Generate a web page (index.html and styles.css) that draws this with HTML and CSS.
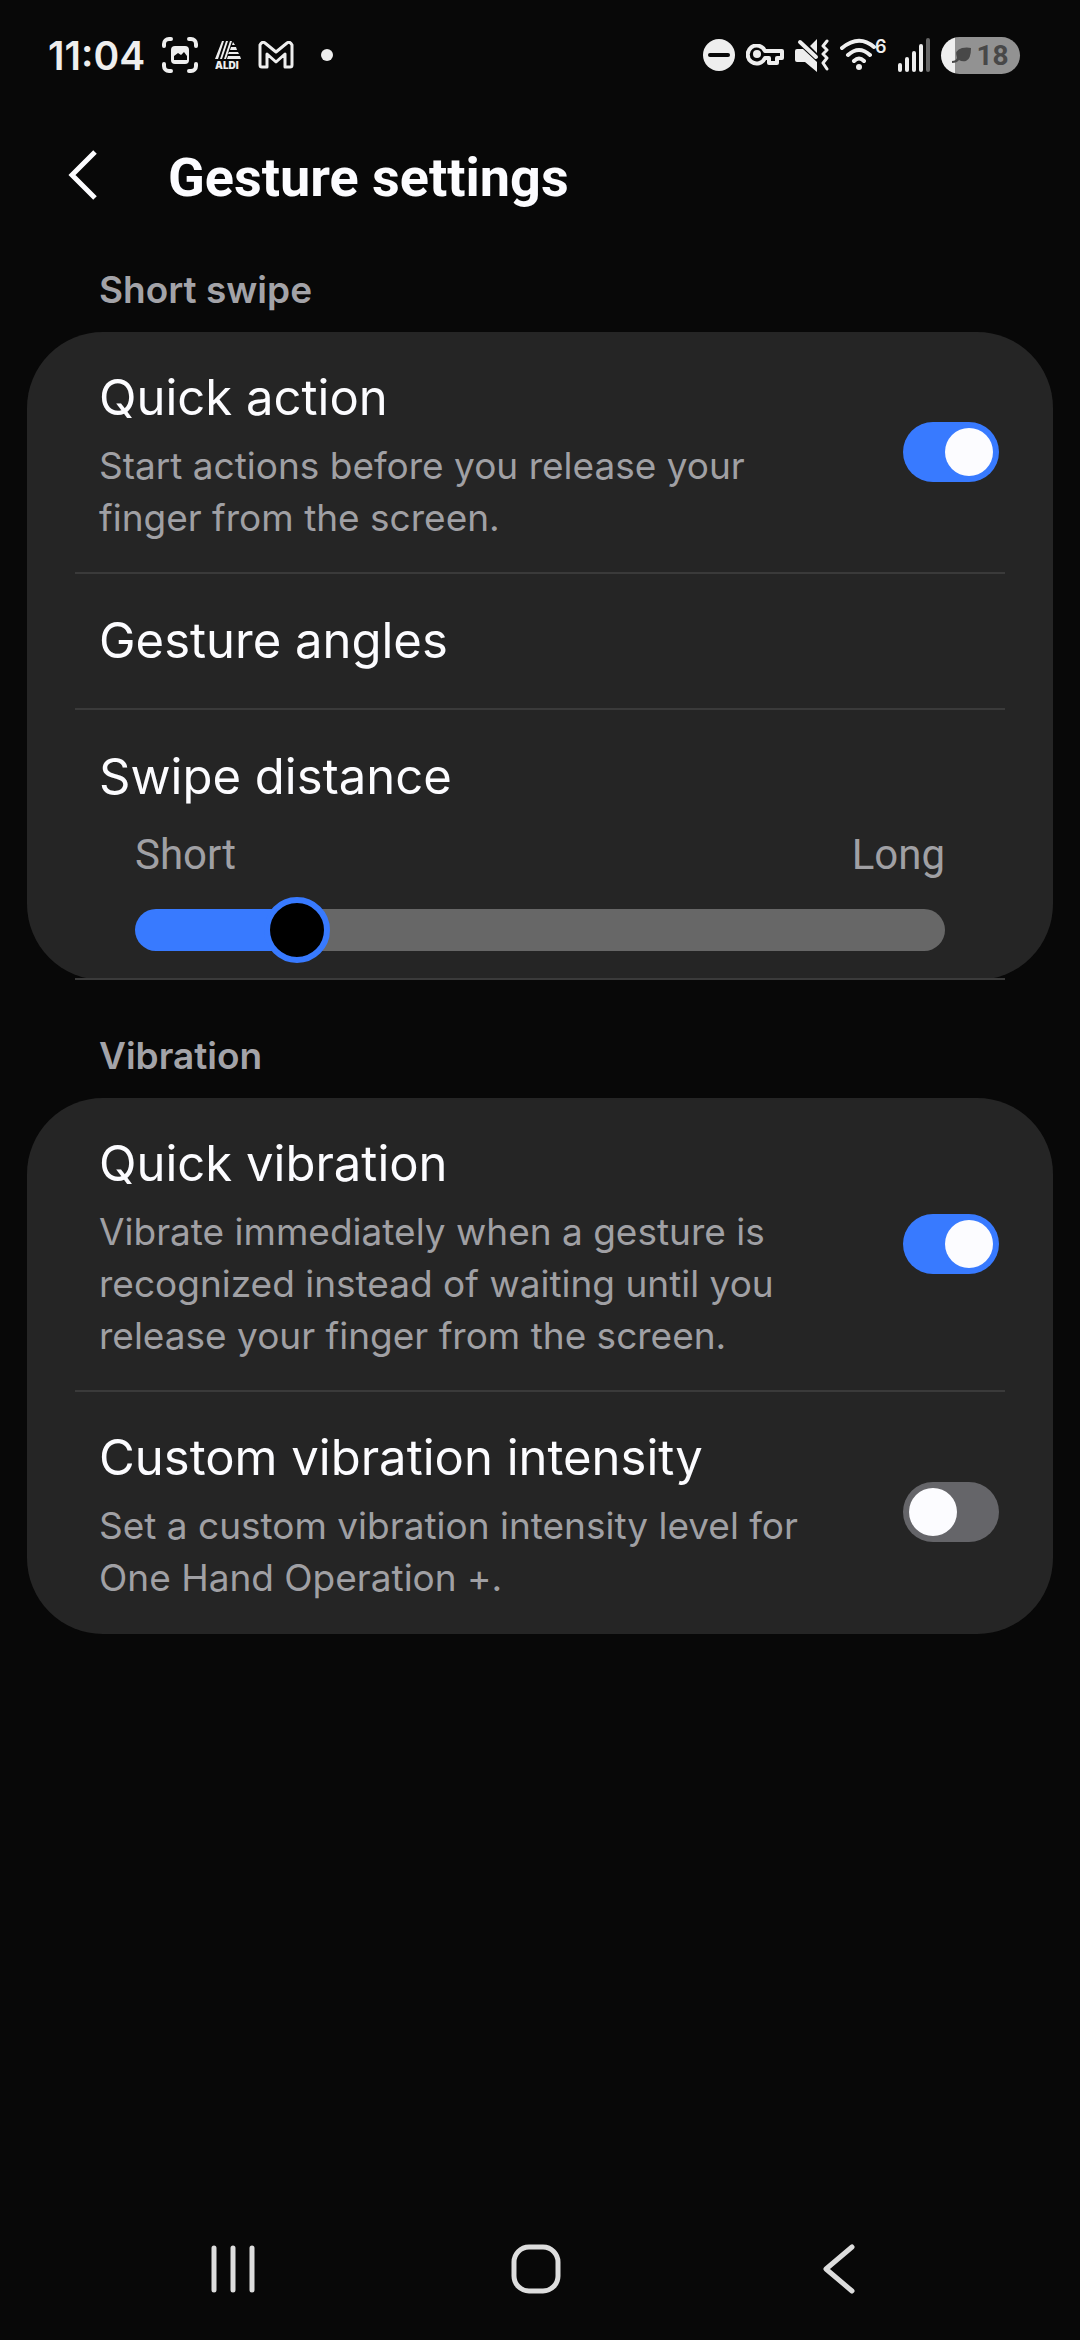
FILE: index.html
```html
<!DOCTYPE html>
<html lang="en">

<head>
    <meta charset="utf-8">
    <meta name="viewport" content="width=device-width">
    <title>Gesture settings</title>
    <link rel="stylesheet" href="styles.css">
</head>

<body>

    <div class="status-bar">
        <div class="status-left">
            <span class="time">11:04</span>
            <svg width="36" height="36" viewBox="0 0 36 36">
                <path class="line" d="M2 9V7a5 5 0 0 1 5-5h2M27 2h2a5 5 0 0 1 5 5v2M34 27v2a5 5 0 0 1-5 5h-2M9 34H7a5 5 0 0 1-5-5v-2" />
                <rect x="9" y="9" width="18" height="18" rx="4" />
                <path class="hole" d="M12 23v-4l4-3 3 2 3-3 3 4v4z" />
            </svg>
            <svg width="26" height="36" viewBox="0 -4 26 36">
                <path d="M0 18L7 0h2L3 18zM5 18L11 0h2L7 18zM9 18L15 0h2L11 18zM18 1l2 3h-3zM16 6h5l1 3h-7zM14 11h9l1 2H13zM13 15h12l1 3H12z" />
                <text class="aldi" x="0" y="28">ALDI</text>
            </svg>
            <svg width="36" height="28" viewBox="0 0 36 28">
                <path class="line-thin" d="M2 4v20q0 2 2 2h5V13l9 8 9-8v13h5q2 0 2-2V4q-2-4-5-2l-11 9L7 2Q4 0 2 4z" />
            </svg>
            <svg width="32" height="12" viewBox="0 0 32 12">
                <circle cx="16" cy="6" r="6" />
            </svg>
        </div>
        <div class="status-right">
            <svg width="32" height="32" viewBox="0 0 32 32">
                <circle cx="16" cy="16" r="16" />
                <path class="line-cut" d="M7 16h18" />
            </svg>
            <svg width="38" height="22" viewBox="0 0 38 22">
                <path class="line" d="M19 7a9 9 0 1 0 0 7h4v5h8v-5h5V7z" />
                <circle cx="11" cy="10" r="4" />
            </svg>
            <svg width="34" height="33" viewBox="0 0 34 33">
                <path d="M2 10h6l14 13v10L10 23H2q-2 0-2-2v-9q0-2 2-2zM22 0v14l-7-7z" />
                <path class="line" d="M5 3l16 15" />
                <path class="line-thin" d="M32 2l-4 5 4 4-4 4 4 4-4 5 4 6" />
            </svg>
            <svg width="47" height="48" viewBox="0 -8 47 48">
                <path class="line" d="M2 9q17-14 32-1M8 16q11-10 22 0M14 22q5-5 10 0" />
                <circle cx="19" cy="28" r="3" />
                <text class="wifi-gen" x="35" y="14">6</text>
            </svg>
            <svg width="32" height="34" viewBox="0 0 32 34">
                <path class="line" d="M2 27v5M9 21v11M16 15v17M23 8v24" />
                <path class="line dim" d="M30 2v30" />
            </svg>
            <div class="battery">
                <svg width="20" height="16" viewBox="0 0 20 16">
                    <path d="M0 14q4 0 5-3-3-8 5-10 5-1 9 0 0 11-5 13-4 1-7-1-2 3-7 3z" />
                </svg>
                <span>18</span>
            </div>
        </div>
    </div>

    <header class="app-bar">
        <button type="button" class="icon-button" aria-label="Back">
            <svg width="32" height="52" viewBox="0 0 32 52">
                <path class="chevron" d="M27 3L4 26l23 23" />
            </svg>
        </button>
        <h1>Gesture settings</h1>
    </header>

    <main>
        <h2>Short swipe</h2>
        <section class="card">
            <label class="row">
                <span class="text">
                    <span class="title">Quick action</span>
                    <span class="summary">Start actions before you release your finger from the screen.</span>
                </span>
                <input type="checkbox" class="switch" checked>
            </label>
            <button type="button" class="row row-button">
                <span class="title">Gesture angles</span>
            </button>
            <div class="row row-slider">
                <label class="title" for="distance">Swipe distance</label>
                <div class="range-labels"><span>Short</span><span>Long</span></div>
                <div class="slider">
                    <input type="range" id="distance" min="0" max="100" value="20">
                </div>
            </div>
        </section>

        <h2>Vibration</h2>
        <section class="card">
            <label class="row">
                <span class="text">
                    <span class="title">Quick vibration</span>
                    <span class="summary">Vibrate immediately when a gesture is recognized instead of waiting until you release your finger from the screen.</span>
                </span>
                <input type="checkbox" class="switch" checked>
            </label>
            <label class="row">
                <span class="text">
                    <span class="title">Custom vibration intensity</span>
                    <span class="summary">Set a custom vibration intensity level for One Hand Operation +.</span>
                </span>
                <input type="checkbox" class="switch">
            </label>
        </section>
    </main>

    <nav class="nav-bar">
        <button type="button" class="icon-button" aria-label="Recents">
            <svg width="44" height="52" viewBox="0 0 44 52">
                <path class="nav-line" d="M3 5v42M22 5v42M41 5v42" />
            </svg>
        </button>
        <button type="button" class="icon-button" aria-label="Home">
            <svg width="52" height="52" viewBox="0 0 52 52">
                <rect class="nav-line" x="4" y="4" width="44" height="44" rx="15" />
            </svg>
        </button>
        <button type="button" class="icon-button" aria-label="Back">
            <svg width="36" height="52" viewBox="0 0 36 52">
                <path class="nav-line" d="M31 4L5 26l26 22" />
            </svg>
        </button>
    </nav>

</body>

</html>
```
FILE: styles.css
```css
* {
    box-sizing: border-box;
}

body {
    margin: 0;
    min-height: 100vh;
    display: flex;
    flex-direction: column;
    background-color: #080808;
    color: #fcfcff;
    font-family: Inter, "Liberation Sans", sans-serif;
}

button {
    padding: 0;
    border: none;
    background: none;
    color: inherit;
    font: inherit;
    text-align: left;
    cursor: pointer;
}

svg {
    display: block;
    flex: none;
    fill: #eee;
}

.status-bar,
.status-left,
.status-right {
    display: flex;
    align-items: center;
}

.status-bar {
    justify-content: space-between;
    height: 110px;
    padding: 0 60px 0 48px;
}

.status-left {
    gap: 17px;
}

.status-right {
    gap: 11px;
}

.time {
    color: #eee;
    font-size: 39px;
    font-weight: 600;
}

.line,
.line-thin,
.line-cut {
    fill: none;
    stroke: #eee;
    stroke-width: 4;
    stroke-linecap: round;
    stroke-linejoin: round;
}

.line-thin {
    stroke-width: 3;
}

.line-cut {
    stroke: #080808;
}

.dim {
    stroke: #666;
}

.hole {
    fill: #080808;
}

.aldi {
    font-size: 10px;
    font-weight: 900;
}

.wifi-gen {
    font-size: 18px;
    font-weight: 600;
}

.battery {
    display: flex;
    align-items: center;
    justify-content: center;
    gap: 4px;
    width: 79px;
    height: 37px;
    border-radius: 19px;
    background: linear-gradient(to right, #eee 18%, #929292 18%);
    color: #484848;
    font: bold 28px Roboto, sans-serif;
}

.battery svg {
    fill: #484848;
}

.app-bar {
    display: flex;
    align-items: center;
    gap: 68px;
    height: 130px;
    padding: 0 68px;
}

h1 {
    margin: 0;
    padding-top: 6px;
    font: bold 54px/64px Roboto, sans-serif;
}

.chevron {
    fill: none;
    stroke: #fcfcff;
    stroke-width: 5;
}

main {
    flex: 1;
    padding: 0 27px;
}

h2 {
    margin: 0;
    padding: 26px 72px 18px;
    color: #a3a3a8;
    font-size: 37px;
    font-weight: 600;
    line-height: 48px;
}

.card + h2 {
    padding-top: 52px;
}

.card {
    padding: 0 48px;
    border-radius: 76px;
    background-color: #252525;
}

.row {
    display: flex;
    align-items: center;
    justify-content: space-between;
    width: 100%;
    padding: 28px 6px 28px 24px;
    border-bottom: 2px solid #3a3a3a;
}

label.row:last-child {
    border-bottom-color: transparent;
}

.row-button {
    padding: 37px 24px;
}

.text {
    width: 730px;
    padding-top: 8px;
}

.title,
.summary {
    display: block;
}

.title {
    font-size: 49px;
    line-height: 60px;
}

.summary {
    padding-top: 12px;
    color: #a0a0a4;
    font-size: 37px;
    line-height: 52px;
}

.switch {
    appearance: none;
    flex: none;
    width: 96px;
    height: 60px;
    margin: 0;
    padding: 6px;
    border-radius: 30px;
    background-color: #656569;
}

.switch::before {
    content: "";
    display: block;
    width: 48px;
    height: 48px;
    border-radius: 50%;
    background-color: #fcfcff;
}

.switch:checked {
    background-color: #387aff;
}

.switch:checked::before {
    margin-left: auto;
}

.row-slider {
    display: block;
    padding: 37px 24px 27px;
}

.range-labels {
    display: flex;
    justify-content: space-between;
    padding: 24px 36px 30px;
    color: #a0a0a4;
    font: 42px/48px Roboto, sans-serif;
}

.slider {
    display: flex;
    align-items: center;
    height: 42px;
    margin: 0 36px;
    border-radius: 21px;
    background: linear-gradient(to right, #387aff 20%, #676767 20%);
}

/* half a thumb wider on each side, so the thumb centre follows the fill */
.slider input {
    appearance: none;
    flex: none;
    width: calc(100% + 66px);
    height: 66px;
    margin: 0 -33px;
    background: none;
}

.slider input::-webkit-slider-thumb {
    appearance: none;
    width: 66px;
    height: 66px;
    border: 6px solid #387aff;
    border-radius: 50%;
    background-color: #000;
}

.nav-bar {
    display: grid;
    grid-template-columns: repeat(3, 1fr);
    justify-items: center;
    align-items: center;
    height: 142px;
    padding: 0 90px 0 82px;
}

.nav-line {
    fill: none;
    stroke: #ddd;
    stroke-width: 5;
    stroke-linecap: round;
    stroke-linejoin: round;
}
```
